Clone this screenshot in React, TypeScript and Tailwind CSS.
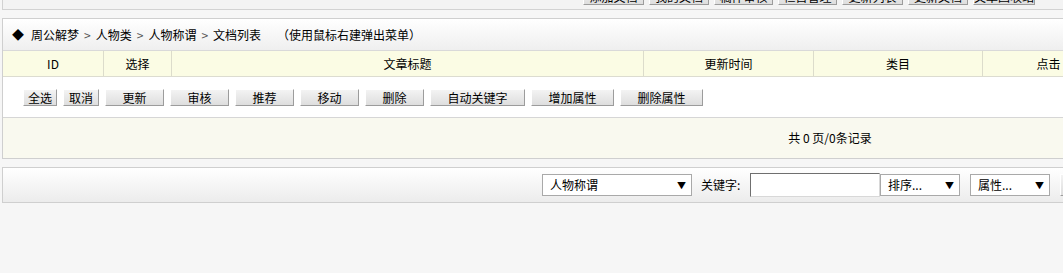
const topButtons = [
  { label: '添加文档', w: 'w-[61px]' },
  { label: '我的文档', w: 'w-[60px]' },
  { label: '稿件审核', w: 'w-[59px]' },
  { label: '栏目管理', w: 'w-[59px]' },
  { label: '更新列表', w: 'w-[61px]' },
  { label: '更新文档', w: 'w-[60px]' },
  { label: '文章回收站', w: 'w-[62px]' },
]

const columns = [
  { label: 'ID', w: 'w-[101px]' },
  { label: '选择', w: 'w-[68px]' },
  { label: '文章标题', w: 'w-[472px]' },
  { label: '更新时间', w: 'w-[170px]' },
  { label: '类目', w: 'w-[169px]' },
  { label: '点击', w: 'w-[132px]' },
  { label: '发布人', w: 'w-[110px]' },
  { label: '操作', w: 'w-[150px]' },
]

const actions = [
  { label: '全选', w: 'w-[34px]' },
  { label: '取消', w: 'w-[36px]' },
  { label: '更新', w: 'w-[59px]' },
  { label: '审核', w: 'w-[59px]' },
  { label: '推荐', w: 'w-[59px]' },
  { label: '移动', w: 'w-[59px]' },
  { label: '删除', w: 'w-[59px]' },
  { label: '自动关键字', w: 'w-[95px]' },
  { label: '增加属性', w: 'w-[83px]' },
  { label: '删除属性', w: 'w-[83px]' },
]

const crumbs = ['周公解梦', '人物类', '人物称谓', '文档列表']

const btnClass =
  'h-[17px] shrink-0 border border-t-white border-l-white border-r-[#9c9c9c] border-b-[#9c9c9c] bg-gradient-to-b from-[#f3f3f3] to-[#dedede] text-[12px] leading-[15px] text-black text-center'

function FakeSelect({ label, w }: { label: string; w: string }) {
  return (
    <div
      className={`${w} flex h-[22px] shrink-0 items-center justify-between border border-[#a9a9a9] bg-white pl-[7px] pr-[5px]`}
    >
      <span>{label}</span>
      <span className="text-[9px] leading-none">▼</span>
    </div>
  )
}

export default function App() {
  return (
    <div className="h-[273px] w-[1063px] overflow-hidden bg-[#f6f6f6] font-['SimSun','Noto_Sans_CJK_SC',sans-serif] text-[12px] text-black">
      {/* top toolbar (scrolled, only bottom edge visible) */}
      <div className="ml-[2px] flex h-[10px] w-[1700px] gap-[5px] overflow-hidden border-b border-l border-[#d2d2d2] bg-[#f3f3f3] pl-[580px]">
        {topButtons.map((b) => (
          <div key={b.label} className={`${btnClass} ${b.w} -mt-[12px]`}>
            {b.label}
          </div>
        ))}
      </div>

      {/* list box */}
      <div className="ml-[2px] mt-[8px] w-[1656px] border border-[#cfcfcf] bg-white">
        <div className="flex h-[32px] items-center border-b border-[#d9d9d9] bg-gradient-to-b from-white to-[#efefef] pl-[9px]">
          <span className="mr-[7px] text-[12px]">◆</span>
          {crumbs.map((c, i) => (
            <span key={c} className="flex items-center">
              {i > 0 && <span className="mx-[5px] text-[#555]">&gt;</span>}
              <span>{c}</span>
            </span>
          ))}
          <span className="ml-[16px]">（使用鼠标右建弹出菜单）</span>
        </div>

        <div className="flex h-[26px] border-b border-[#dcdcd0] bg-[#fbfce4]">
          {columns.map((c) => (
            <div
              key={c.label}
              className={`${c.w} flex shrink-0 items-center justify-center border-r border-[#dcdccb]`}
            >
              {c.label}
            </div>
          ))}
        </div>

        <div className="flex h-[41px] gap-[6px] border-b border-[#d6d6d6] bg-white pl-[20px] pt-[12px]">
          {actions.map((a) => (
            <div key={a.label} className={`${btnClass} ${a.w}`}>
              {a.label}
            </div>
          ))}
        </div>

        <div className="flex h-[40px] items-center justify-center bg-[#f9f9ef]">
          共 0 页/0条记录
        </div>
      </div>

      {/* search bar */}
      <div className="ml-[2px] mt-[8px] flex h-[36px] w-[1656px] items-center border border-[#cfcfcf] bg-gradient-to-b from-white to-[#ececec] pl-[539px]">
        <FakeSelect label="人物称谓" w="w-[150px]" />
        <span className="w-[58px] shrink-0 pl-[9px]">关键字:</span>
        <div className="h-[24px] w-[130px] shrink-0 border border-t-[#6f6f6f] border-l-[#6f6f6f] border-r-[#d8d8d8] border-b-[#d8d8d8] bg-white" />
        <FakeSelect label="排序..." w="w-[80px]" />
        <div className="ml-[10px]">
          <FakeSelect label="属性..." w="w-[80px]" />
        </div>
        <div className={`${btnClass} ml-[10px] h-[22px] w-[50px] leading-[20px]`}>搜索</div>
      </div>
    </div>
  )
}
